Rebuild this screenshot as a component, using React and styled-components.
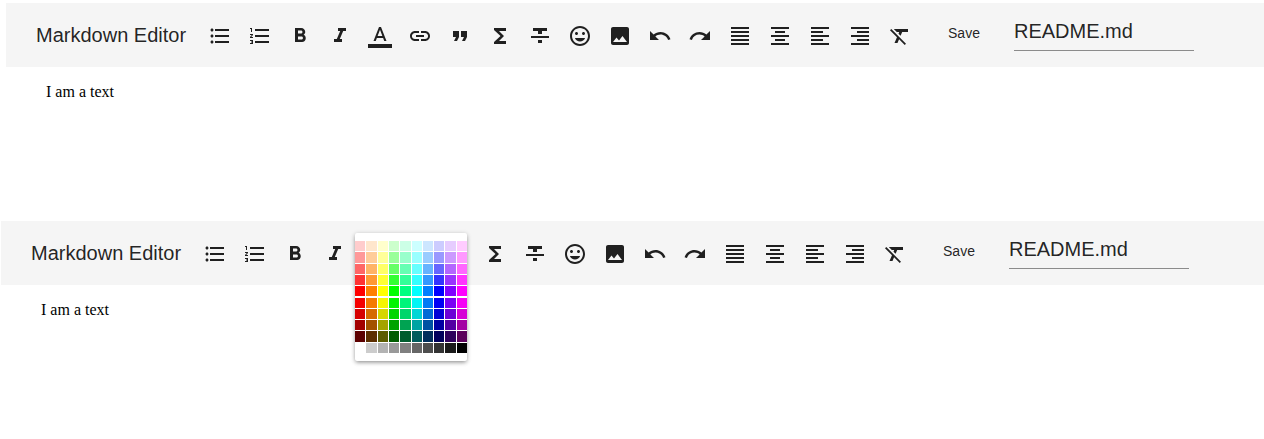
import React from 'react';
import styled, { createGlobalStyle } from 'styled-components';
import {
  MdFormatListBulleted,
  MdFormatListNumbered,
  MdFormatBold,
  MdFormatItalic,
  MdInsertLink,
  MdFormatQuote,
  MdFunctions,
  MdFormatStrikethrough,
  MdInsertEmoticon,
  MdImage,
  MdUndo,
  MdRedo,
  MdFormatAlignJustify,
  MdFormatAlignCenter,
  MdFormatAlignLeft,
  MdFormatAlignRight,
  MdFormatClear,
} from 'react-icons/md';

const GlobalStyle = createGlobalStyle`
  body {
    margin: 0;
    background: #fff;
    overflow: hidden;
  }
  * {
    box-sizing: border-box;
  }
`;

const Page = styled.main`
  display: flex;
  flex-direction: column;
  height: 439px;
  padding-top: 3px;
`;

const EditorFrame = styled.section`
  height: 218px;
  padding-left: ${({ $inset }) => $inset}px;
`;

const Toolbar = styled.header`
  display: flex;
  height: 64px;
  padding-left: 30px;
  background: #f5f5f5;
  color: rgba(0, 0, 0, 0.87);
  font-family: 'Liberation Sans', Arial, sans-serif;
`;

const Title = styled.h1`
  width: 164px;
  margin: 0;
  font-size: 20px;
  font-weight: 400;
  line-height: 64px;
  white-space: nowrap;
`;

const Tools = styled.div`
  display: flex;
  padding-top: 13px;
`;

const ToolSlot = styled.div`
  position: relative;
  width: 40px;
  height: 40px;
`;

const ToolButton = styled.button`
  display: flex;
  align-items: center;
  justify-content: center;
  width: 40px;
  height: 40px;
  padding: 0;
  border: 0;
  background: none;
  color: inherit;
`;

const SaveButton = styled.button`
  width: 88px;
  height: 60px;
  padding: 0;
  border: 0;
  background: none;
  color: inherit;
  font-family: inherit;
  font-size: 14px;
  line-height: 60px;
`;

const FileName = styled.input`
  width: 180px;
  height: 41px;
  margin: 7px 0 0 6px;
  padding: 2px 0 0;
  border: 0;
  border-bottom: 1px solid #8b8b8b;
  border-radius: 0;
  outline: 0;
  background: transparent;
  color: inherit;
  font-family: inherit;
  font-size: 20px;
`;

const Content = styled.p`
  margin: 0;
  padding: 16px 40px;
  color: #000;
  font: 16px/18px 'Liberation Serif', 'Times New Roman', serif;
`;

const Palette = styled.div`
  position: absolute;
  z-index: 1;
  top: -1px;
  left: 0;
  padding: 8px 0;
  width: 112px;
  height: 128px;
  border-radius: 2px;
  background: #fff;
  box-shadow: 0 2px 4px -1px rgba(0, 0, 0, 0.35), 0 1px 5px rgba(0, 0, 0, 0.2);
`;

const Swatches = styled.div`
  display: grid;
  grid-template-columns: 10px 11px 10px 10px 11px 10px 10px 10px 11px 10px;
  grid-template-rows: 10px 11px 10px 10px 11px 10px 10px 10px 11px 10px;
  gap: 1px;
`;

const Swatch = styled.span`
  background: ${({ $color }) => $color};
  ${({ $short }) => $short && 'height: 10px;'}
`;

const HUES = [0, 30, 60, 120, 150, 180, 210, 240, 270, 300];
const LIGHTNESS = [90, 80, 70, 60, 50, 48, 42, 32, 18];
const GREYS = [100, 80, 70, 60, 50, 40, 30, 20, 10, 0];

function TextColorIcon({ size }) {
  return (
    <svg width={size} height={size} viewBox="0 0 24 24" fill="currentColor">
      <path d="M0 20h24v4H0z" />
      <path d="M11 3L5.5 17h2.25l1.12-3h6.25l1.12 3h2.25L13 3h-2zm-1.38 9L12 5.67 14.38 12H9.62z" />
    </svg>
  );
}

const TOOLS = [
  ['Bulleted list', MdFormatListBulleted],
  ['Numbered list', MdFormatListNumbered],
  ['Bold', MdFormatBold],
  ['Italic', MdFormatItalic],
  ['Text color', TextColorIcon],
  ['Link', MdInsertLink],
  ['Quote', MdFormatQuote],
  ['Formula', MdFunctions],
  ['Strikethrough', MdFormatStrikethrough],
  ['Emoji', MdInsertEmoticon],
  ['Image', MdImage],
  ['Undo', MdUndo],
  ['Redo', MdRedo],
  ['Justify', MdFormatAlignJustify],
  ['Align center', MdFormatAlignCenter],
  ['Align left', MdFormatAlignLeft],
  ['Align right', MdFormatAlignRight],
  ['Clear formatting', MdFormatClear],
];

function ColorPalette() {
  return (
    <Palette>
      <Swatches>
        {LIGHTNESS.map((l, row) =>
          HUES.map((h) => (
            <Swatch key={`${l}-${h}`} $color={`hsl(${h}, 100%, ${l}%)`} $short={row === 4} />
          ))
        )}
        {GREYS.map((l) => (
          <Swatch key={`grey-${l}`} $color={`hsl(0, 0%, ${l}%)`} />
        ))}
      </Swatches>
    </Palette>
  );
}

function Editor({ inset, paletteOpen }) {
  return (
    <EditorFrame $inset={inset}>
      <Toolbar>
        <Title>Markdown Editor</Title>
        <Tools>
          {TOOLS.map(([label, Icon]) => (
            <ToolSlot key={label}>
              <ToolButton aria-label={label}>
                <Icon size={24} />
              </ToolButton>
              {paletteOpen && label === 'Text color' && <ColorPalette />}
            </ToolSlot>
          ))}
        </Tools>
        <SaveButton>Save</SaveButton>
        <FileName aria-label="File name" defaultValue="README.md" />
      </Toolbar>
      <Content>I am a text</Content>
    </EditorFrame>
  );
}

export default function App() {
  return (
    <>
      <GlobalStyle />
      <Page>
        <Editor inset={6} />
        <Editor inset={1} paletteOpen />
      </Page>
    </>
  );
}
